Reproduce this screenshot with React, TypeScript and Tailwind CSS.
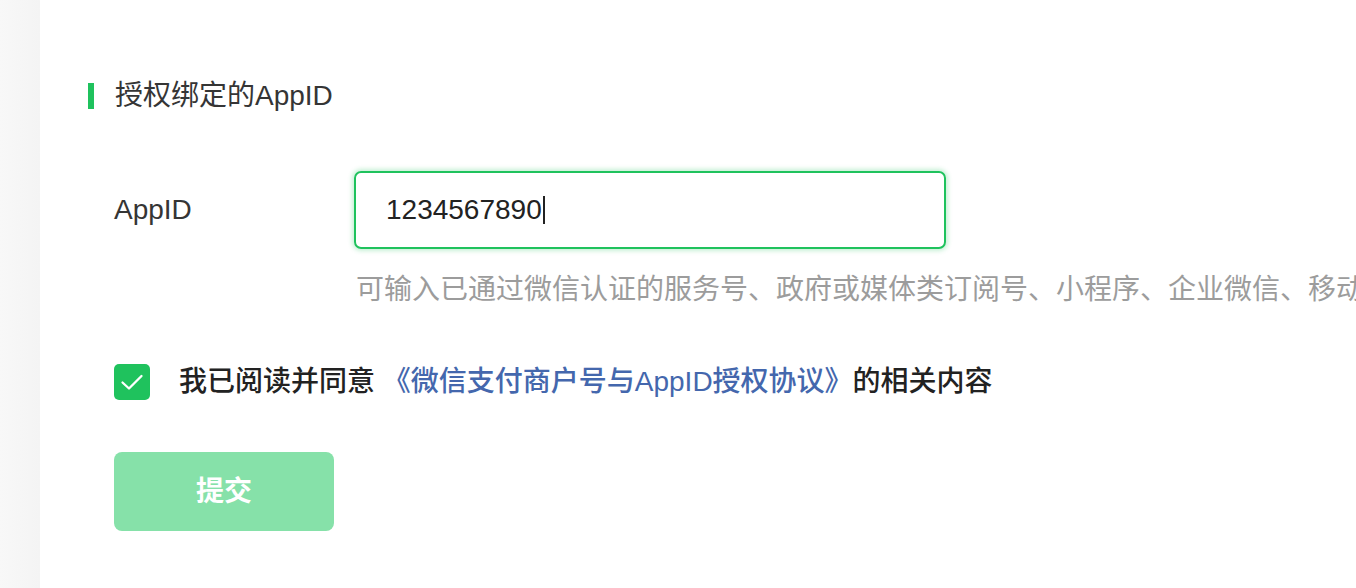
import React, { useState } from 'react';

const FONT = '"Liberation Sans", "Noto Sans CJK SC", sans-serif';

const App: React.FC = () => {
  // Valor atual do AppID
  const [appId] = useState('1234567890');
  const [agreed, setAgreed] = useState(true);

  return (
    <div className="flex min-h-[588px] w-full bg-white" style={{ fontFamily: FONT }}>
      {/* Barra lateral */}
      <div className="w-[40px] shrink-0 bg-gradient-to-r from-[#f8f8f8] to-[#f4f4f4]" />

      {/* Conteúdo */}
      <div className="flex min-w-0 flex-1 flex-col overflow-hidden pl-[48px] pt-[82px]">
        <div className="flex items-center">
          <span className="h-[26px] w-[6px] bg-[#1fc25d]" />
          <h2 className="ml-[21px] text-[28px] leading-[28px] text-[#353535]">授权绑定的AppID</h2>
        </div>

        <div className="mt-[61px] flex items-center pl-[26px]">
          <label className="w-[240px] shrink-0 text-[28px] leading-[28px] text-[#353535]">AppID</label>
          <div className="flex h-[78px] w-[592px] shrink-0 items-center rounded-[7px] border-2 border-[#1fc25d] pl-[30px] shadow-[0_0_4px_2px_rgba(31,194,93,0.25)]">
            <span className="text-[28px] leading-[28px] text-[#222]">{appId}</span>
            <span className="ml-[1px] h-[28px] w-[2px] bg-[#222]" />
          </div>
        </div>

        <p className="mt-[27px] whitespace-nowrap pl-[268px] text-[28px] leading-[28px] text-[#9c9c9c]">
          可输入已通过微信认证的服务号、政府或媒体类订阅号、小程序、企业微信、移动应用
        </p>

        <div className="mt-[60px] flex items-center pl-[26px]">
          <button
            onClick={() => setAgreed(!agreed)}
            className="flex h-[36px] w-[36px] items-center justify-center rounded-[5px] bg-[#1fc25d]"
          >
            {agreed && (
              <svg width="28" height="28" viewBox="0 0 28 28" fill="none">
                <path d="M4.5 14.5 L11 20.5 L23.5 8" stroke="white" strokeWidth="2.3" strokeLinecap="round" strokeLinejoin="round" />
              </svg>
            )}
          </button>
          <span className="ml-[29px] text-[28px] font-medium leading-[36px] text-[#222]">
            我已阅读并同意 <span className="text-[#4467ad]">《微信支付商户号与AppID授权协议》</span>的相关内容
          </span>
        </div>

        <div className="mt-[52px] pl-[26px]">
          <button className="h-[79px] w-[220px] rounded-[8px] bg-[#86e1a9] text-[28px] font-bold text-white">
            提交
          </button>
        </div>
      </div>
    </div>
  );
};

export default App;
